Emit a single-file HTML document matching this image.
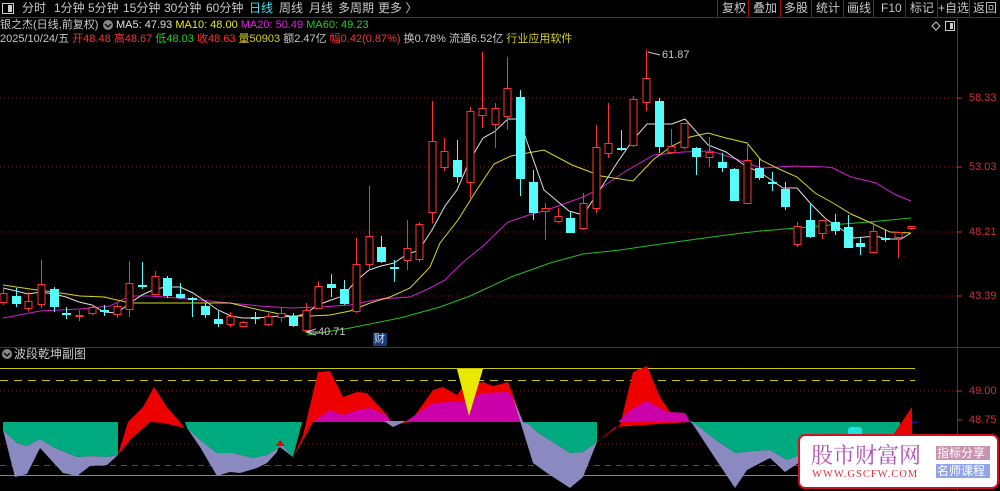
<!DOCTYPE html>
<html><head><meta charset="utf-8"><style>
body{margin:0;background:#000;width:1000px;height:491px;overflow:hidden;position:relative;font-family:"Liberation Sans","Noto Sans CJK SC",sans-serif;}
.t{position:absolute;font-size:12px;color:#c8c8c8;white-space:nowrap;line-height:14px}
</style></head><body>
<svg width="1000" height="491" style="position:absolute;left:0;top:0">
<g stroke="#8a1a1a" stroke-dasharray="1,3">
<line x1="0" y1="98" x2="957" y2="98"/><line x1="0" y1="167" x2="957" y2="167"/><line x1="0" y1="232" x2="957" y2="232"/><line x1="0" y1="296" x2="957" y2="296"/>
<line x1="0" y1="391" x2="957" y2="391"/><line x1="0" y1="444" x2="957" y2="444"/>
</g>
<line x1="0" y1="17.5" x2="1000" y2="17.5" stroke="#a01010"/>
<line x1="0" y1="347.5" x2="1000" y2="347.5" stroke="#a01010"/>
<line x1="957.5" y1="17" x2="957.5" y2="491" stroke="#a01010"/>
<g stroke="#a01010"><line x1="717.5" y1="0" x2="717.5" y2="17"/><line x1="748.5" y1="0" x2="748.5" y2="17"/><line x1="780.5" y1="0" x2="780.5" y2="17"/><line x1="811.5" y1="0" x2="811.5" y2="17"/><line x1="843.5" y1="0" x2="843.5" y2="17"/><line x1="873.5" y1="0" x2="873.5" y2="17"/><line x1="905.5" y1="0" x2="905.5" y2="17"/><line x1="937.5" y1="0" x2="937.5" y2="17"/><line x1="969.5" y1="0" x2="969.5" y2="17"/></g>
<rect x="2.5" y="3.5" width="11" height="10" fill="none" stroke="#ccc"/><rect x="8" y="5" width="4" height="7" fill="#ccc"/>
<g stroke="#c03030"><line x1="957" y1="98" x2="962" y2="98"/><line x1="957" y1="167" x2="962" y2="167"/><line x1="957" y1="232" x2="962" y2="232"/><line x1="957" y1="296" x2="962" y2="296"/><line x1="957" y1="391" x2="962" y2="391"/><line x1="957" y1="420" x2="962" y2="420"/></g>
<g fill="none" stroke-width="1">
<polyline stroke="#1fc01f" points="307,335 350,328 400,318 440,307 470,296 511,277 550,263 583,254 620,250 654,245 690,240 726,235 760,231 797,228 830,225 869,222 890,220 911,218"/>
<polyline stroke="#d020d0" points="3,318 40,311 80,309 110,306 130,296 150,296 190,299 230,303 260,306 290,308 320,307 350,305 380,299 410,297 430,288 445,280 461,264 483,246 508,222 529,215 547,210 583,197 601,188 626,171 654,155 683,152 711,151 736,159 761,168 794,166 826,167 833,168 851,177 876,183 894,194 911,201"/>
<polyline stroke="#d8d820" points="3,285 30,289 54,292 80,296 104,297 130,303 160,303 190,303 230,303 260,310 290,316 310,316 330,315 350,311 370,303 390,297 410,288 430,267 440,243 458,220 476,191 494,164 511,156 544,150 572,165 601,176 633,181 654,159 672,146 690,137 708,133 726,138 747,143 761,160 779,169 797,177 815,193 833,203 851,214 869,222 890,232 911,233"/>
<polyline stroke="#e0e0e0" points="3,288 16,291 28,294 41,292 54,294 66,297 79,302 92,305 104,312 117,313 130,303 142,295 155,289 167,287 180,287 193,293 205,301 218,310 231,316 243,318 255,318 268,317 280,316 293,317 305,314 318,305 331,300 343,296 356,281 369,270 381,266 394,263 406,255 419,250 432,230 445,206 457,190 470,160 483,138 494,132 508,119 519,119 544,190 569,211 583,215 601,188 619,160 633,140 647,124 672,124 685,119 708,145 726,152 744,165 761,173 783,188 797,188 811,204 826,219 844,231 854,238 876,236 886,239 901,239 911,233"/>
</g>
<g stroke="#ff3232">
<line x1="3.5" y1="288" x2="3.5" y2="305"/><line x1="28.5" y1="292" x2="28.5" y2="311"/><line x1="41.5" y1="260" x2="41.5" y2="308"/><line x1="79.5" y1="310" x2="79.5" y2="321"/><line x1="92.5" y1="305" x2="92.5" y2="315"/><line x1="117.5" y1="303" x2="117.5" y2="318"/><line x1="129.5" y1="261" x2="129.5" y2="317"/><line x1="155.5" y1="271" x2="155.5" y2="295"/><line x1="230.5" y1="312" x2="230.5" y2="327"/><line x1="243.5" y1="321" x2="243.5" y2="327"/><line x1="268.5" y1="313" x2="268.5" y2="326"/><line x1="281.5" y1="307" x2="281.5" y2="322"/><line x1="306.5" y1="303" x2="306.5" y2="331"/><line x1="318.5" y1="281" x2="318.5" y2="309"/><line x1="356.5" y1="238" x2="356.5" y2="313"/><line x1="369.5" y1="186" x2="369.5" y2="270"/><line x1="407.5" y1="220" x2="407.5" y2="270"/><line x1="419.5" y1="222" x2="419.5" y2="262"/><line x1="432.5" y1="101" x2="432.5" y2="223"/><line x1="444.5" y1="138" x2="444.5" y2="171"/><line x1="470.5" y1="107" x2="470.5" y2="198"/><line x1="482.5" y1="52" x2="482.5" y2="128"/><line x1="495.5" y1="103" x2="495.5" y2="148"/><line x1="507.5" y1="57" x2="507.5" y2="130"/><line x1="545.5" y1="203" x2="545.5" y2="240"/><line x1="558.5" y1="208" x2="558.5" y2="223"/><line x1="583.5" y1="193" x2="583.5" y2="230"/><line x1="596.5" y1="125" x2="596.5" y2="213"/><line x1="608.5" y1="103" x2="608.5" y2="158"/><line x1="633.5" y1="96" x2="633.5" y2="147"/><line x1="646.5" y1="50" x2="646.5" y2="111"/><line x1="671.5" y1="129" x2="671.5" y2="154"/><line x1="684.5" y1="123" x2="684.5" y2="149"/><line x1="709.5" y1="137" x2="709.5" y2="167"/><line x1="747.5" y1="142" x2="747.5" y2="203"/><line x1="797.5" y1="222" x2="797.5" y2="247"/><line x1="822.5" y1="220" x2="822.5" y2="239"/><line x1="873.5" y1="222" x2="873.5" y2="253"/><line x1="898.5" y1="232" x2="898.5" y2="258"/><line x1="911.5" y1="226" x2="911.5" y2="230"/>
</g>
<g stroke="#54fcfc">
<line x1="16.5" y1="288" x2="16.5" y2="307"/><line x1="54.5" y1="287" x2="54.5" y2="312"/><line x1="66.5" y1="307" x2="66.5" y2="319"/><line x1="104.5" y1="305" x2="104.5" y2="316"/><line x1="142.5" y1="262" x2="142.5" y2="289"/><line x1="167.5" y1="276" x2="167.5" y2="298"/><line x1="180.5" y1="283" x2="180.5" y2="299"/><line x1="192.5" y1="297" x2="192.5" y2="317"/><line x1="205.5" y1="303" x2="205.5" y2="318"/><line x1="218.5" y1="311" x2="218.5" y2="327"/><line x1="255.5" y1="312" x2="255.5" y2="324"/><line x1="293.5" y1="313" x2="293.5" y2="327"/><line x1="331.5" y1="274" x2="331.5" y2="297"/><line x1="344.5" y1="280" x2="344.5" y2="305"/><line x1="381.5" y1="236" x2="381.5" y2="263"/><line x1="394.5" y1="260" x2="394.5" y2="282"/><line x1="457.5" y1="140" x2="457.5" y2="183"/><line x1="520.5" y1="90" x2="520.5" y2="196"/><line x1="533.5" y1="170" x2="533.5" y2="220"/><line x1="570.5" y1="212" x2="570.5" y2="233"/><line x1="621.5" y1="130" x2="621.5" y2="151"/><line x1="659.5" y1="98" x2="659.5" y2="153"/><line x1="696.5" y1="147" x2="696.5" y2="175"/><line x1="722.5" y1="153" x2="722.5" y2="172"/><line x1="734.5" y1="168" x2="734.5" y2="201"/><line x1="759.5" y1="159" x2="759.5" y2="180"/><line x1="772.5" y1="172" x2="772.5" y2="191"/><line x1="785.5" y1="182" x2="785.5" y2="210"/><line x1="810.5" y1="203" x2="810.5" y2="238"/><line x1="835.5" y1="214" x2="835.5" y2="235"/><line x1="848.5" y1="215" x2="848.5" y2="248"/><line x1="860.5" y1="237" x2="860.5" y2="255"/><line x1="885.5" y1="230" x2="885.5" y2="242"/>
</g>
<g fill="#000" stroke="#ff3232">
<rect x="0" y="293.5" width="7" height="9"/><rect x="25" y="301.5" width="7" height="7"/><rect x="38" y="284.5" width="7" height="20"/><rect x="76" y="315.5" width="7" height="1"/><rect x="89" y="307.5" width="7" height="6"/><rect x="114" y="306.5" width="7" height="8"/><rect x="126" y="283.5" width="7" height="26"/><rect x="152" y="276.5" width="7" height="18"/><rect x="227" y="316.5" width="7" height="8"/><rect x="240" y="322.5" width="7" height="4"/><rect x="265" y="316.5" width="7" height="8"/><rect x="278" y="313.5" width="7" height="4"/><rect x="303" y="310.5" width="7" height="20"/><rect x="315" y="286.5" width="7" height="22"/><rect x="353" y="264.5" width="7" height="47"/><rect x="366" y="236.5" width="7" height="28"/><rect x="404" y="248.5" width="7" height="12"/><rect x="416" y="224.5" width="7" height="35"/><rect x="429" y="141.5" width="7" height="71"/><rect x="441" y="151.5" width="7" height="16"/><rect x="467" y="111.5" width="7" height="71"/><rect x="479" y="108.5" width="7" height="7"/><rect x="492" y="108.5" width="7" height="16"/><rect x="504" y="88.5" width="7" height="28"/><rect x="542" y="208.5" width="7" height="3"/><rect x="555" y="216.5" width="7" height="5"/><rect x="580" y="203.5" width="7" height="25"/><rect x="593" y="147.5" width="7" height="61"/><rect x="605" y="143.5" width="7" height="10"/><rect x="630" y="99.5" width="7" height="46"/><rect x="643" y="78.5" width="7" height="24"/><rect x="668" y="146.5" width="7" height="6"/><rect x="681" y="123.5" width="7" height="24"/><rect x="706" y="152.5" width="7" height="5"/><rect x="744" y="160.5" width="7" height="43"/><rect x="794" y="226.5" width="7" height="18"/><rect x="819" y="220.5" width="7" height="13"/><rect x="870" y="231.5" width="7" height="21"/><rect x="895" y="232.5" width="7" height="5"/><rect x="908" y="226.5" width="7" height="2"/>
</g>
<g fill="#54fcfc">
<rect x="12" y="296" width="9" height="8"/><rect x="50" y="289" width="9" height="18"/><rect x="62" y="313" width="9" height="2"/><rect x="100" y="310" width="9" height="2"/><rect x="138" y="285" width="9" height="2"/><rect x="163" y="278" width="9" height="18"/><rect x="176" y="294" width="9" height="4"/><rect x="188" y="298" width="9" height="2"/><rect x="201" y="306" width="9" height="9"/><rect x="214" y="319" width="9" height="5"/><rect x="251" y="317" width="9" height="2"/><rect x="289" y="316" width="9" height="10"/><rect x="327" y="284" width="9" height="4"/><rect x="340" y="289" width="9" height="15"/><rect x="377" y="247" width="9" height="15"/><rect x="390" y="267" width="9" height="2"/><rect x="453" y="160" width="9" height="17"/><rect x="516" y="97" width="9" height="82"/><rect x="529" y="182" width="9" height="31"/><rect x="566" y="218" width="9" height="15"/><rect x="617" y="148" width="9" height="2"/><rect x="655" y="101" width="9" height="46"/><rect x="692" y="148" width="9" height="9"/><rect x="718" y="162" width="9" height="6"/><rect x="730" y="169" width="9" height="32"/><rect x="755" y="168" width="9" height="10"/><rect x="768" y="182" width="9" height="2"/><rect x="781" y="189" width="9" height="18"/><rect x="806" y="220" width="9" height="17"/><rect x="831" y="222" width="9" height="9"/><rect x="844" y="227" width="9" height="21"/><rect x="856" y="243" width="9" height="4"/><rect x="881" y="238" width="9" height="2"/>
</g>
<polyline points="316,329 306,332 316,335" fill="none" stroke="#ccc"/><line x1="306" y1="332" x2="318" y2="332" stroke="#ccc"/>
<line x1="648" y1="52" x2="660" y2="55" stroke="#ccc"/>
<rect x="373" y="333" width="14" height="13" fill="#1a3a80"/>
<g stroke-width="1">
<line x1="0" y1="368.5" x2="915" y2="368.5" stroke="#c8c800"/>
<line x1="0" y1="380.5" x2="915" y2="380.5" stroke="#c8c800" stroke-dasharray="8,6"/>
<line x1="0" y1="465.5" x2="915" y2="465.5" stroke="#c02020" stroke-dasharray="6,5"/>
<line x1="0" y1="475.5" x2="915" y2="475.5" stroke="#20b0b0"/>
</g>
<g>
<path fill="#00aa7f" d="M3,422 L118,422 L118,455 L107,457 L93,456 L77,457 L53,447 L40,439 L27,446 L17,443 L3,430 Z"/>
<path fill="#8a8ac0" d="M3,430 L17,443 L27,446 L40,439 L53,447 L77,457 L93,456 L107,457 L118,455 L107,465 L90,466 L77,476 L63,473 L40,448 L27,474 L15,477 Z"/>
<path fill="#ee0000" d="M118,455 L128,422 L143,407 L154,387 L167,407 L185,428 L163,423 L150,422 L130,440 Z"/>
<path fill="#00aa7f" d="M185,422 L302,422 L293,457 L280,447 L267,455 L253,458 L233,453 L217,453 L200,440 L187,428 Z"/>
<path fill="#8a8ac0" d="M187,428 L200,440 L217,453 L233,453 L253,458 L267,455 L280,447 L293,457 L280,443 L277,452 L267,463 L257,468 L240,473 L230,472 L217,476 L200,447 Z"/>
<path fill="#ee0000" d="M276,446 L280,440 L285,446 Z"/>
<path fill="#ee0000" d="M293,458 L303,435 L318,372 L330,371 L343,397 L357,392 L367,393 L387,415 L393,425 L410,422 L433,390 L443,387 L457,395 L462,388 L483,382 L493,386 L508,382 L513,395 L523,422 L313,422 Z"/>
<path fill="#cc00aa" d="M313,422 L330,410 L343,415 L357,410 L370,408 L387,415 L390,422 Z M405,422 L433,403 L450,402 L460,402 L483,393 L508,392 L513,398 L523,422 Z"/>
<path fill="#8a8ac0" d="M384,421 L393,427 L406,421 Z"/>
<path fill="#e8e800" d="M457,369 L483,369 L469,416 Z"/>
<path fill="#00aa7f" d="M523,422 L597,422 L597,442 L583,452 L570,453 L537,432 L530,425 Z"/>
<path fill="#8a8ac0" d="M513,398 L523,422 L530,425 L537,432 L570,453 L583,452 L597,442 L583,477 L570,488 L547,473 L533,463 Z"/>
<path fill="#ee0000" d="M597,442 L620,425 L633,372 L647,366 L660,397 L670,412 L685,413 L690,422 L615,427 Z"/>
<path fill="#cc00aa" d="M618,422 L633,408 L647,401 L667,412 L685,413 L690,422 Z"/>
<path fill="#00aa7f" d="M690,422 L900,422 L900,470 L800,455 L787,460 L770,450 L753,451 L735,453 L713,438 Z"/>
<path fill="#8a8ac0" d="M690,420 L713,438 L735,453 L753,451 L770,450 L787,460 L800,455 L800,462 L785,472 L770,458 L747,470 L735,488 L713,455 Z"/>
<rect x="848" y="427" width="14" height="9" rx="3" fill="#22e0e0"/>
<path fill="#ee0000" d="M893,435 L912,407 L912,440 Z"/>
<line x1="912" y1="422" x2="918" y2="422" stroke="#2020ff"/>
</g>
<circle cx="7" cy="354" r="5" fill="#888"/><path d="M4,353 L7,356 L10,353" stroke="#000" fill="none" stroke-width="1.3"/>
<circle cx="108" cy="25" r="5" fill="#888"/><path d="M105,24 L108,27 L111,24" stroke="#000" fill="none" stroke-width="1.3"/>
<path d="M932,26 L936,22 L940,26 L936,30 Z" fill="none" stroke="#ccc"/>
<rect x="945.5" y="21.5" width="9" height="9" fill="none" stroke="#ccc"/><rect x="950" y="23" width="3" height="6" fill="#ccc"/>
<rect x="799" y="435" width="199" height="53" rx="6" fill="#fff" stroke="#d01020" stroke-width="2"/>
<rect x="936" y="446" width="54" height="14" fill="#c892b0"/>
<rect x="936" y="464" width="54" height="14" fill="#90a4e8"/>
</svg>
<div class="t" style="left:22px;top:1px">分时</div>
<div class="t" style="left:54px;top:1px">1分钟</div>
<div class="t" style="left:88px;top:1px">5分钟</div>
<div class="t" style="left:123px;top:1px">15分钟</div>
<div class="t" style="left:164px;top:1px">30分钟</div>
<div class="t" style="left:206px;top:1px">60分钟</div>
<div class="t" style="left:249px;top:1px;color:#40e0f0">日线</div>
<div class="t" style="left:279px;top:1px">周线</div>
<div class="t" style="left:309px;top:1px">月线</div>
<div class="t" style="left:338px;top:1px">多周期</div>
<div class="t" style="left:378px;top:1px">更多 〉</div>
<div class="t" style="left:722px;top:1px">复权</div>
<div class="t" style="left:753px;top:1px">叠加</div>
<div class="t" style="left:784px;top:1px">多股</div>
<div class="t" style="left:816px;top:1px">统计</div>
<div class="t" style="left:847px;top:1px">画线</div>
<div class="t" style="left:881px;top:1px">F10</div>
<div class="t" style="left:910px;top:1px">标记</div>
<div class="t" style="left:938px;top:1px">+自选</div>
<div class="t" style="left:973px;top:1px">返回</div>
<div class="t" style="left:0;top:18px;font-size:11px">银之杰(日线,前复权)</div>
<div class="t" style="left:116px;top:18px;font-size:11px"><span style="color:#e0e0e0">MA5: 47.93</span> <span style="color:#e8e820">MA10: 48.00</span> <span style="color:#e020e0">MA20: 50.49</span> <span style="color:#20d020">MA60: 49.23</span></div>
<div class="t" style="left:0;top:32px;font-size:11px">2025/10/24/五 <span style="color:#ff3030">开48.48 高48.67</span> <span style="color:#20d020">低48.03</span> <span style="color:#ff3030">收48.63</span> <span style="color:#d8d020">量50903</span> 额2.47亿 <span style="color:#ff3030">幅0.42(0.87%)</span> 换0.78% 流通6.52亿 <span style="color:#d8d020">行业应用软件</span></div>
<div class="t" style="left:318px;top:325px;font-size:11px">40.71</div>
<div class="t" style="left:662px;top:48px;font-size:11px">61.87</div>
<div class="t" style="left:374px;top:332px;font-size:11px;color:#cde">财</div>
<div class="t" style="left:14px;top:347px;font-size:12px">波段乾坤副图</div>
<div class="t" style="left:969px;top:91px;font-size:11px;color:#d03030">58.33</div>
<div class="t" style="left:969px;top:160px;font-size:11px;color:#d03030">53.03</div>
<div class="t" style="left:969px;top:225px;font-size:11px;color:#d03030">48.21</div>
<div class="t" style="left:969px;top:289px;font-size:11px;color:#d03030">43.39</div>
<div class="t" style="left:969px;top:384px;font-size:11px;color:#d03030">49.00</div>
<div class="t" style="left:969px;top:413px;font-size:11px;color:#d03030">48.75</div>
<div class="t" style="left:811px;top:442px;font-size:22px;line-height:26px;color:#b050b0;font-family:'Noto Serif CJK SC','Noto Sans CJK SC',sans-serif">股市财富网</div>
<div class="t" style="left:812px;top:468px;font-size:10.5px;color:#e03040;font-family:'Liberation Serif',serif;letter-spacing:1px">WWW.GSCFW.COM</div>
<div class="t" style="left:937px;top:446px;font-size:12px;color:#fff">指标分享</div>
<div class="t" style="left:937px;top:464px;font-size:12px;color:#fff">名师课程</div>
</body></html>
